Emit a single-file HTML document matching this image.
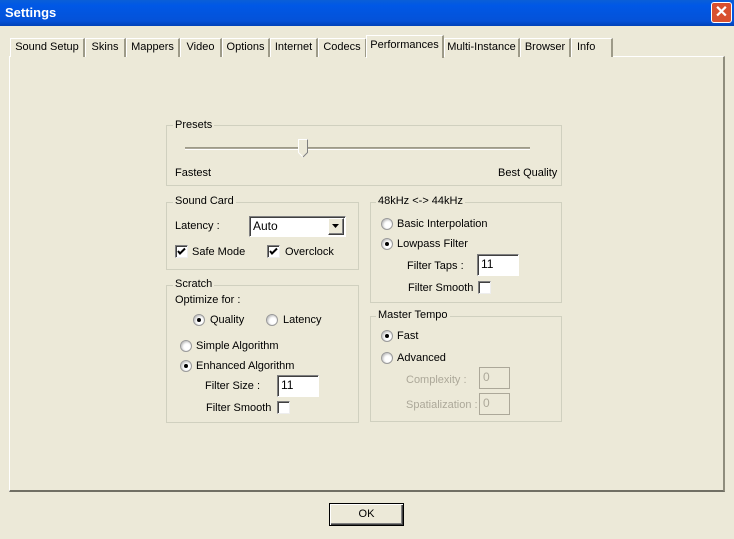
<!DOCTYPE html>
<html><head><meta charset="utf-8"><style>
*{margin:0;padding:0;box-sizing:border-box}
body{width:734px;height:539px;background:#ECE9D8;position:relative;overflow:hidden;font-family:"Liberation Sans",sans-serif;font-size:11px;color:#000}
.a{position:absolute}
.t{position:absolute;white-space:nowrap;line-height:13px}
.g{position:absolute;border:1px solid #D0D0BF}
.gl{position:absolute;background:#ECE9D8;padding:0 2px;line-height:13px;white-space:nowrap}
.tab{position:absolute;top:38px;height:19px;border:1px solid #fff;border-right:2px solid #9d9a88;border-bottom:none;background:#ECE9D8;text-align:center;line-height:16px;font-size:11px}
.rb{position:absolute;width:12px;height:12px;border-radius:50%;background:#fff;border:1px solid #9a9a9a;box-shadow:inset 1px 1px 2px #bbb}
.rb.on::after{content:"";position:absolute;left:3px;top:3px;width:4px;height:4px;border-radius:50%;background:#000}
.cb{position:absolute;width:13px;height:13px;background:#fff;border:1px solid #808080;border-right-color:#eee;border-bottom-color:#eee;box-shadow:inset 1px 1px #404040}
.ed{position:absolute;background:#fff;border:1px solid #808080;border-right-color:#fff;border-bottom-color:#fff;box-shadow:inset 1px 1px #404040;padding:2px 0 0 3px;font-size:12px}
.dis{color:#ACA899}
</style></head><body>
<div class="a" style="left:0;top:0;width:734px;height:26px;background:linear-gradient(#0A5FD8,#0058E6 20%,#0452D8 80%,#0142B8)"></div>
<div class="t" style="left:5px;top:6px;color:#fff;font-weight:bold;font-size:13px">Settings</div>
<div class="a" style="left:711px;top:2px;width:21px;height:21px;border-radius:3px;background:#D8502F;border:1px solid #fff;color:#fff;font-size:16px;font-weight:bold;text-align:center;line-height:19px">✕</div>

<div class="a" style="left:9px;top:56px;width:716px;height:436px;border:1px solid #fff;border-right:2px solid #8f8d7d;border-bottom:2px solid #716f64"></div>

<div class="tab" style="left:10px;width:75px">Sound Setup</div>
<div class="tab" style="left:85px;width:41px">Skins</div>
<div class="tab" style="left:126px;width:54px">Mappers</div>
<div class="tab" style="left:180px;width:42px">Video</div>
<div class="tab" style="left:222px;width:48px">Options</div>
<div class="tab" style="left:270px;width:48px">Internet</div>
<div class="tab" style="left:318px;width:49px">Codecs</div>
<div class="tab" style="left:444px;width:76px">Multi-Instance</div>
<div class="tab" style="left:520px;width:51px">Browser</div>
<div class="tab" style="left:571px;width:42px;text-align:left;padding-left:5px">Info</div>
<div class="tab" style="left:366px;top:35px;width:78px;height:23px;line-height:18px;border-right-color:#9d9a88">Performances</div>

<div class="g" style="left:166px;top:125px;width:396px;height:61px"></div>
<div class="gl" style="left:173px;top:119px">Presets</div>
<div class="a" style="left:185px;top:147px;width:345px;height:3px;border-top:1px solid #9d9a88;border-bottom:1px solid #fff;background:#ACA899"></div>
<svg class="a" style="left:298px;top:139px" width="11" height="20"><path d="M0.5 0.5H9.5V13.5L5 18L0.5 13.5Z" fill="#ECE9D8" stroke="#fff"/><path d="M9.5 0.5V13.5L5 18" fill="none" stroke="#808080"/></svg>
<div class="t" style="left:175px;top:167px">Fastest</div>
<div class="t" style="left:498px;top:167px">Best Quality</div>

<div class="g" style="left:166px;top:202px;width:193px;height:68px"></div>
<div class="gl" style="left:173px;top:195px">Sound Card</div>
<div class="t" style="left:175px;top:220px">Latency :</div>
<div class="ed" style="left:249px;top:216px;width:97px;height:21px">Auto</div>
<div class="a" style="left:328px;top:218px;width:16px;height:17px;background:#ECE9D8;border:1px solid #fff;border-right-color:#404040;border-bottom-color:#404040;box-shadow:inset -1px -1px #808080"></div>
<svg class="a" style="left:332px;top:224px" width="8" height="5"><path d="M0 0H7L3.5 4Z" fill="#000"/></svg>
<div class="cb" style="left:175px;top:245px"></div>
<svg class="a" style="left:177px;top:247px" width="9" height="9"><path d="M1 4L3 6.5L8 1.5" fill="none" stroke="#000" stroke-width="2"/></svg>
<div class="t" style="left:192px;top:246px">Safe Mode</div>
<div class="cb" style="left:267px;top:245px"></div>
<svg class="a" style="left:269px;top:247px" width="9" height="9"><path d="M1 4L3 6.5L8 1.5" fill="none" stroke="#000" stroke-width="2"/></svg>
<div class="t" style="left:285px;top:246px">Overclock</div>

<div class="g" style="left:370px;top:202px;width:192px;height:101px"></div>
<div class="gl" style="left:376px;top:195px">48kHz &lt;-&gt; 44kHz</div>
<div class="rb" style="left:381px;top:218px"></div><div class="t" style="left:397px;top:218px">Basic Interpolation</div>
<div class="rb on" style="left:381px;top:238px"></div><div class="t" style="left:397px;top:238px">Lowpass Filter</div>
<div class="t" style="left:407px;top:260px">Filter Taps :</div>
<div class="ed" style="left:477px;top:254px;width:42px;height:22px">11</div>
<div class="t" style="left:408px;top:282px">Filter Smooth</div>
<div class="cb" style="left:478px;top:281px"></div>

<div class="g" style="left:166px;top:285px;width:193px;height:138px"></div>
<div class="gl" style="left:173px;top:278px">Scratch</div>
<div class="t" style="left:175px;top:294px">Optimize for :</div>
<div class="rb on" style="left:193px;top:314px"></div><div class="t" style="left:210px;top:314px">Quality</div>
<div class="rb" style="left:266px;top:314px"></div><div class="t" style="left:283px;top:314px">Latency</div>
<div class="rb" style="left:180px;top:340px"></div><div class="t" style="left:196px;top:340px">Simple Algorithm</div>
<div class="rb on" style="left:180px;top:360px"></div><div class="t" style="left:196px;top:360px">Enhanced Algorithm</div>
<div class="t" style="left:205px;top:380px">Filter Size :</div>
<div class="ed" style="left:277px;top:375px;width:42px;height:22px">11</div>
<div class="t" style="left:206px;top:402px">Filter Smooth</div>
<div class="cb" style="left:277px;top:401px"></div>

<div class="g" style="left:370px;top:316px;width:192px;height:106px"></div>
<div class="gl" style="left:376px;top:309px">Master Tempo</div>
<div class="rb on" style="left:381px;top:330px"></div><div class="t" style="left:397px;top:330px">Fast</div>
<div class="rb" style="left:381px;top:352px"></div><div class="t" style="left:397px;top:352px">Advanced</div>
<div class="t dis" style="left:406px;top:374px">Complexity :</div>
<div class="ed dis" style="left:479px;top:367px;width:31px;height:22px;background:#ECE9D8;box-shadow:none;border:1px solid #ACA899">0</div>
<div class="t dis" style="left:406px;top:399px">Spatialization :</div>
<div class="ed dis" style="left:479px;top:393px;width:31px;height:22px;background:#ECE9D8;box-shadow:none;border:1px solid #ACA899">0</div>

<div class="a" style="left:329px;top:503px;width:75px;height:23px;border:1px solid #000;background:#ECE9D8;box-shadow:inset 1px 1px #fff,inset -1px -1px #404040,inset -2px -2px #808080;text-align:center;line-height:20px">OK</div>
</body></html>
